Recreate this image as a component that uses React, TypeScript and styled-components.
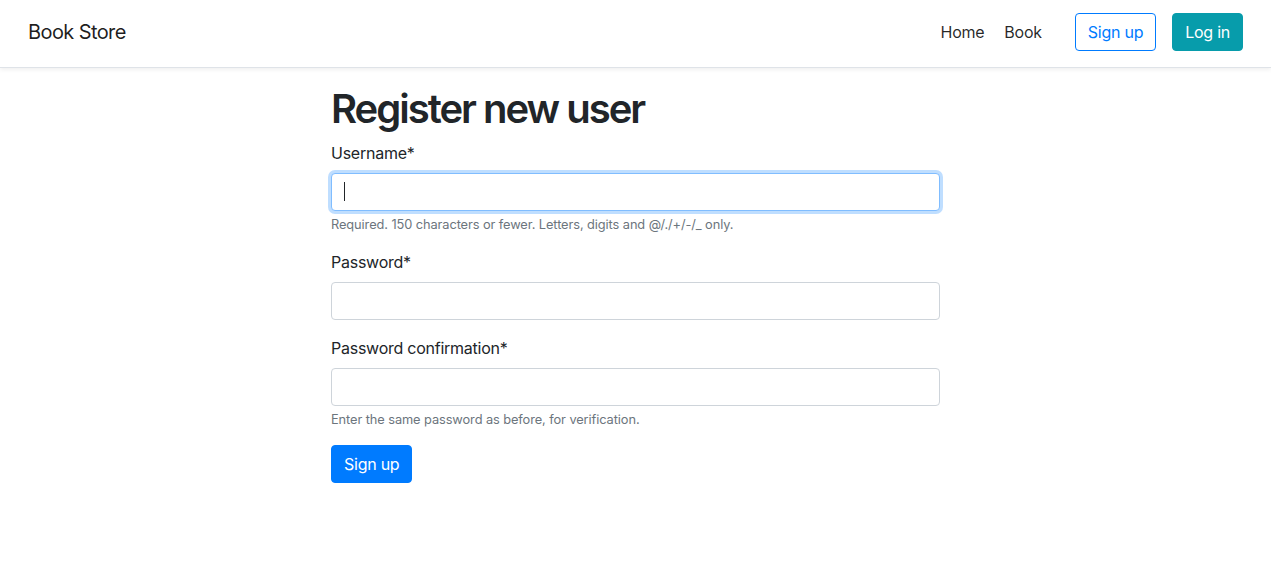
import React from "react";
import styled, { createGlobalStyle } from "styled-components";

const Global = createGlobalStyle`
  * { box-sizing: border-box; }
  body {
    margin: 0;
    font-family: Inter, "Noto Sans", "Liberation Sans", sans-serif;
    font-size: 16px;
    line-height: 1.5;
    letter-spacing: -0.25px;
    color: #212529;
    background: #fff;
  }
`;

const Navbar = styled.nav`
  display: flex;
  align-items: center;
  justify-content: space-between;
  height: 68px;
  padding: 0 28px 3px 28px;
  background: #fff;
  border-bottom: 1px solid #dfe3e8;
  box-shadow: 0 2px 4px rgba(0, 0, 0, 0.06);
`;

const Brand = styled.a`
  font-size: 20px;
  line-height: 30px;
  letter-spacing: -0.6px;
  color: rgba(0, 0, 0, 0.88);
  text-decoration: none;
`;

const NavRight = styled.div`
  display: flex;
  align-items: center;
`;

const NavLink = styled.a`
  padding: 8px 10px;
  color: rgba(0, 0, 0, 0.85);
  text-decoration: none;
  font-size: 16px;
`;

const NavButton = styled.a<{ $variant: "outline" | "info" }>`
  display: inline-flex;
  align-items: center;
  justify-content: center;
  height: 38px;
  padding: 0 12px;
  border-radius: 4px;
  font-size: 16px;
  text-decoration: none;
  margin-left: ${(p) => (p.$variant === "outline" ? "23px" : "16px")};
  border: 1px solid ${(p) => (p.$variant === "outline" ? "#007bff" : "#079cab")};
  color: ${(p) => (p.$variant === "outline" ? "#007bff" : "#fff")};
  background: ${(p) => (p.$variant === "outline" ? "#fff" : "#079cab")};
`;

const Main = styled.main`
  width: 609px;
  margin: 0 auto;
  padding-top: 17px;
`;

const Title = styled.h1`
  margin: 0 0 8px;
  font-size: 40px;
  font-weight: 600;
  line-height: 48px;
  letter-spacing: -2px;
`;

const Group = styled.div`
  margin-bottom: 16px;
`;

const Label = styled.label`
  display: block;
  margin-bottom: 8px;
  font-size: 16px;
  line-height: 24px;
`;

const Field = styled.div`
  position: relative;
`;

const Input = styled.input<{ $focused?: boolean }>`
  display: block;
  width: 100%;
  height: 38px;
  padding: 6px 12px;
  font-size: 16px;
  font-family: inherit;
  border-radius: 4px;
  outline: none;
  background: #fff;
  border: 1px solid ${(p) => (p.$focused ? "#80bdff" : "#ced4da")};
  box-shadow: ${(p) => (p.$focused ? "0 0 0 3px rgba(0, 123, 255, 0.25)" : "none")};
`;

const Caret = styled.span`
  position: absolute;
  left: 13px;
  top: 9px;
  width: 1px;
  height: 19px;
  background: #212529;
`;

const Help = styled.small`
  display: block;
  margin-top: 4px;
  font-size: 12.8px;
  line-height: 19px;
  letter-spacing: -0.08px;
  color: #6c757d;
`;

const Submit = styled.button`
  height: 38px;
  padding: 0 12px;
  border: 1px solid #007bff;
  border-radius: 4px;
  background: #007bff;
  color: #fff;
  font-family: inherit;
  font-size: 16px;
  letter-spacing: -0.25px;
  line-height: 24px;
`;

export default function App() {
  return (
    <>
      <Global />
      <Navbar>
        <Brand href="#">Book Store</Brand>
        <NavRight>
          <NavLink href="#">Home</NavLink>
          <NavLink href="#">Book</NavLink>
          <NavButton $variant="outline" href="#">Sign up</NavButton>
          <NavButton $variant="info" href="#">Log in</NavButton>
        </NavRight>
      </Navbar>
      <Main>
        <Title>Register new user</Title>
        <form onSubmit={(e) => e.preventDefault()}>
          <Group>
            <Label htmlFor="username">Username*</Label>
            <Field>
              <Input id="username" type="text" $focused />
              <Caret />
            </Field>
            <Help>Required. 150 characters or fewer. Letters, digits and @/./+/-/_ only.</Help>
          </Group>
          <Group>
            <Label htmlFor="password1">Password*</Label>
            <Input id="password1" type="password" />
          </Group>
          <Group>
            <Label htmlFor="password2">Password confirmation*</Label>
            <Input id="password2" type="password" />
            <Help>Enter the same password as before, for verification.</Help>
          </Group>
          <Submit type="submit">Sign up</Submit>
        </form>
      </Main>
    </>
  );
}
